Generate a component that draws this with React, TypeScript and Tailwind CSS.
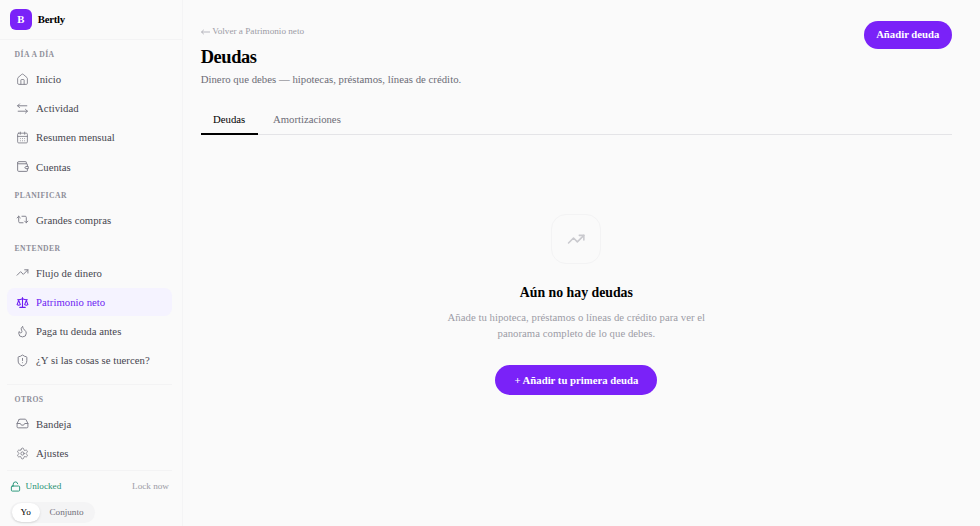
import type { ReactNode } from 'react';
import {
  House,
  CalendarDays,
  Repeat2,
  TrendingUp,
  Scale,
  Flame,
  ShieldAlert,
  Inbox,
  Settings,
  LockOpen,
} from 'lucide-react';

const ICON = 'h-[13px] w-[13px] shrink-0';

function Glyph({ children }: { children: ReactNode }) {
  return (
    <svg
      viewBox="0 0 24 24"
      fill="none"
      stroke="currentColor"
      strokeWidth={1.75}
      strokeLinecap="round"
      strokeLinejoin="round"
      className={ICON}
    >
      {children}
    </svg>
  );
}

function SectionLabel({ children }: { children: ReactNode }) {
  return (
    <div className="px-[7.6px] pt-[9.1px] pb-[4.9px] text-[7.66px] leading-[11.5px] font-bold tracking-[0.055em] text-[#8e8e99] uppercase">
      {children}
    </div>
  );
}

function NavItem({ icon, label, active = false }: { icon: ReactNode; label: string; active?: boolean }) {
  return (
    <a
      className={`flex h-[27.65px] items-center gap-[7.3px] rounded-[7.66px] pl-[8.8px] ${
        active ? 'bg-[#f5f3ff] text-[#6d1df2]' : 'text-[#464650]'
      }`}
    >
      <span className={active ? 'text-[#6d1df2]' : 'text-[#7d7d88]'}>{icon}</span>
      <span className="tracking-[0.002em] whitespace-nowrap">{label}</span>
    </a>
  );
}

function Sidebar() {
  return (
    <aside className="flex w-[182.5px] shrink-0 flex-col border-r border-[#f4f4f5]">
      <div className="flex h-[39.9px] shrink-0 items-center gap-[6.3px] border-b border-[#f3f3f4] pl-[10px]">
        <div className="flex h-[21.5px] w-[21.5px] items-center justify-center rounded-[6px] bg-[#7a22f8] text-[10.72px] font-bold text-white">
          B
        </div>
        <span className="text-[10.72px] font-bold tracking-[-0.025em] text-black">Bertly</span>
      </div>
      <nav className="pr-[10px] pl-[7px] text-[10.72px]">
        <SectionLabel>Día a día</SectionLabel>
        <div className="flex flex-col gap-[1.53px]">
          <NavItem icon={<House className={ICON} strokeWidth={1.6} />} label="Inicio" />
          <NavItem
            icon={
              <Glyph>
                <path d="M6.500 3.500 3 7l3.500 3.500M3 7h17M17.500 13.500 21 17l-3.500 3.500M21 17H4" />
              </Glyph>
            }
            label="Actividad"
          />
          <NavItem icon={<CalendarDays className={ICON} strokeWidth={1.6} />} label="Resumen mensual" />
          <NavItem
            icon={
              <Glyph>
                <path d="M19 7V4a1 1 0 0 0-1-1H5a2 2 0 0 0 0 4h15a1 1 0 0 1 1 1v4" />
                <path d="M3 5v14a2 2 0 0 0 2 2h15a1 1 0 0 0 1-1v-4" />
                <path d="M22 12h-3.500L16 14l2.500 2H22z" />
              </Glyph>
            }
            label="Cuentas"
          />
        </div>
        <SectionLabel>Planificar</SectionLabel>
        <NavItem icon={<Repeat2 className={ICON} strokeWidth={1.75} />} label="Grandes compras" />
        <SectionLabel>Entender</SectionLabel>
        <div className="flex flex-col gap-[1.53px]">
          <NavItem icon={<TrendingUp className={ICON} strokeWidth={1.75} />} label="Flujo de dinero" />
          <NavItem icon={<Scale className={ICON} strokeWidth={2} />} label="Patrimonio neto" active />
          <NavItem icon={<Flame className={ICON} strokeWidth={1.75} />} label="Paga tu deuda antes" />
          <NavItem icon={<ShieldAlert className={ICON} strokeWidth={1.75} />} label="¿Y si las cosas se tuercen?" />
        </div>
        <div className="mt-[9.4px] border-t border-[#f3f3f4]">
          <SectionLabel>Otros</SectionLabel>
          <div className="flex flex-col gap-[1.53px]">
            <NavItem icon={<Inbox className={ICON} strokeWidth={1.75} />} label="Bandeja" />
            <NavItem icon={<Settings className={ICON} strokeWidth={1.6} />} label="Ajustes" />
          </div>
        </div>
      </nav>
      <div className="mt-[3px] mr-[10px] ml-[7px] border-t border-[#f3f3f4] pr-[2.5px] pl-[3px] text-[9.19px]">
        <div className="mt-[9.5px] flex h-[12.25px] items-center justify-between">
          <span className="flex items-center gap-[4.6px] text-[#1f9274]">
            <LockOpen className="h-[11px] w-[11px]" strokeWidth={2} />
            Unlocked
          </span>
          <span className="text-[#9c9ca6]">Lock now</span>
        </div>
        <div className="mt-[9.2px] flex h-[21.5px] w-[84.500px] items-center rounded-full bg-[#f4f4f5] p-[1.5px]">
          <span className="flex h-[18.5px] w-[28.500px] items-center justify-center rounded-full bg-white text-black shadow-sm">
            Yo
          </span>
          <span className="flex-1 text-center text-[#71717a]">Conjunto</span>
        </div>
      </div>
    </aside>
  );
}

export default function App() {
  return (
    <div className="flex h-[526px] w-[980px] overflow-hidden bg-[#fafafa] font-['Liberation_Serif',serif]">
      <Sidebar />
      <main className="flex-1 pt-[21px] pr-[28px] pl-[18.2px]">
        <header className="flex items-start justify-between">
          <div>
            <a className="mt-[4px] flex h-[12.25px] items-center gap-[2.6px] text-[9.19px] leading-[12.25px] text-[#9c9ca6]">
              <svg viewBox="0 0 9 6" fill="none" stroke="currentColor" strokeWidth={0.7} className="mt-[1px] h-[6px] w-[9px]">
                <path d="M9 3H.5M2.800.8.5 3l2.300 2.200" />
              </svg>
              Volver a Patrimonio neto
            </a>
            <h1 className="mt-[8.2px] text-[18.4px] leading-[24.5px] font-bold tracking-[-0.022em] text-black">Deudas</h1>
            <p className="mt-[2.3px] text-[10.72px] leading-[15.3px] tracking-[0.003em] text-[#6c6c76]">
              Dinero que debes — hipotecas, préstamos, líneas de crédito.
            </p>
          </div>
          <button className="h-[27.500px] w-[88.500px] rounded-full bg-[#7a22f8] pb-[1px] text-[10.72px] font-bold text-white">
            Añadir deuda
          </button>
        </header>
        <div className="mt-[17.500px] flex h-[30px] border-b border-[#e4e4e7] text-[10.72px]">
          <div className="flex h-[30px] w-[57px] items-center justify-center border-b-2 border-black pt-[1px] text-black">
            Deudas
          </div>
          <div className="ml-[3px] flex h-[28px] items-center px-[12.25px] pt-[1px] text-[#6c6c76]">Amortizaciones</div>
        </div>
        <section className="flex flex-col items-center pt-[79px] text-center">
          <div className="flex h-[50px] w-[50px] items-center justify-center rounded-[15px] border border-[#f3f3f4] text-[#c9c9ce]">
            <TrendingUp className="h-[18.4px] w-[18.4px]" strokeWidth={2} />
          </div>
          <h2 className="mt-[17.8px] text-[13.8px] leading-[21.4px] font-bold text-black">Aún no hay deudas</h2>
          <p className="mt-[7.2px] w-[268px] text-[10.72px] leading-[15.3px] tracking-[0.003em] text-[#9c9ca6]">
            Añade tu hipoteca, préstamos o líneas de crédito para ver el panorama completo de lo que debes.
          </p>
          <button className="mt-[23.800px] h-[30.600px] w-[162px] rounded-full bg-[#7a22f8] text-[10.72px] font-bold text-white">
            + Añadir tu primera deuda
          </button>
        </section>
      </main>
    </div>
  );
}
